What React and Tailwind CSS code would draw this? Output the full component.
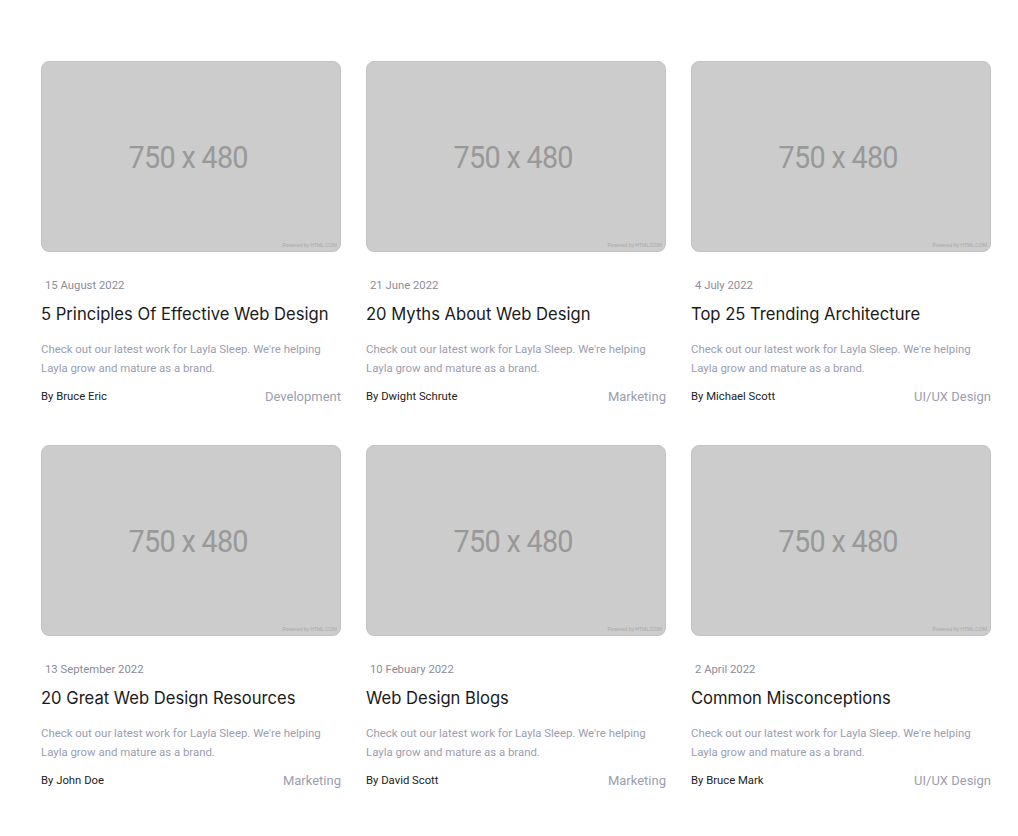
const posts = [
    { date: "15 August 2022", title: "5 Principles Of Effective Web Design", author: "Bruce Eric", category: "Development" },
    { date: "21 June 2022", title: "20 Myths About Web Design", author: "Dwight Schrute", category: "Marketing" },
    { date: "4 July 2022", title: "Top 25 Trending Architecture", author: "Michael Scott", category: "UI/UX Design" },
    { date: "13 September 2022", title: "20 Great Web Design Resources", author: "John Doe", category: "Marketing" },
    { date: "10 Febuary 2022", title: "Web Design Blogs", author: "David Scott", category: "Marketing" },
    { date: "2 April 2022", title: "Common Misconceptions", author: "Bruce Mark", category: "UI/UX Design" },
];

function Placeholder() {
    return (
        <div className="relative h-[191px] w-full rounded-lg border border-[#c4c4c4] bg-[#cccccc] flex items-center justify-center">
            <span className="-ml-[6px] text-[32px] text-[#999999] scale-x-[0.9] tracking-tight" style={{ fontFamily: "Roboto, sans-serif" }}>
                750 x 480
            </span>
            <span className="absolute bottom-[2px] right-[3px] text-[5px] text-[#a8a8a8]" style={{ fontFamily: "'Liberation Sans', sans-serif" }}>
                Powered by HTML.COM
            </span>
        </div>
    );
}

function PostCard({ post }) {
    return (
        <div className="flex flex-col">
            <Placeholder />
            <p className="mt-[26px] pl-1 text-[11.3px] leading-4 text-[#8c8c99]">{post.date}</p>
            <h3 className="mt-[8px] text-[16.6px] leading-6 text-[#1a1a1a]" style={{ fontFamily: "Inter, sans-serif" }}>
                {post.title}
            </h3>
            <p className="mt-[14px] text-[11.4px] leading-[19px] text-[#9b9db0]">
                Check out our latest work for Layla Sleep. We're helping Layla grow and mature as a brand.
            </p>
            <div className="mt-[9px] flex items-center justify-between leading-5">
                <span className="text-[11.3px] text-[#222]">By {post.author}</span>
                <span className="text-[13px] text-[#9b9db0]">{post.category}</span>
            </div>
        </div>
    );
}

export default function App() {
    return (
        <div className="min-h-screen bg-white" style={{ fontFamily: "Roboto, sans-serif" }}>
            <div className="ml-[41px] w-[950px] pt-[61px] grid grid-cols-3 gap-x-[25px] gap-y-[38px]">
                {posts.map((p) => (
                    <PostCard key={p.title} post={p} />
                ))}
            </div>
        </div>
    );
}
